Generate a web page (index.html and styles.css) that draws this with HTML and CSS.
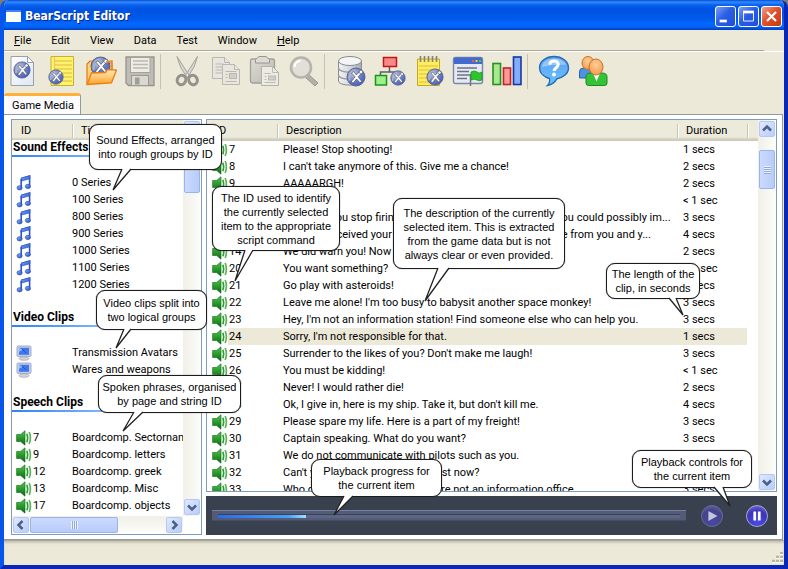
FILE: index.html
```html
<!DOCTYPE html>
<html lang="en">
<head>
<meta charset="utf-8">
<title>BearScript Editor</title>
<link rel="stylesheet" href="styles.css">
</head>
<body>
<svg class="defs" aria-hidden="true">
  <defs>
    <linearGradient id="gNote" x1="0" y1="0" x2="1" y2="1"><stop offset="0" stop-color="#8fc4ff"/><stop offset="1" stop-color="#1c3fb8"/></linearGradient>
    <linearGradient id="gGreen" x1="0" y1="0" x2="0" y2="1"><stop offset="0" stop-color="#4cc94a"/><stop offset="1" stop-color="#0b6a12"/></linearGradient>
    <radialGradient id="gBall" cx=".35" cy=".3" r=".8"><stop offset="0" stop-color="#b9c6e6"/><stop offset=".6" stop-color="#6479c4"/><stop offset="1" stop-color="#3c58c8"/></radialGradient>
    <linearGradient id="gPage" x1="0" y1="0" x2="1" y2="1"><stop offset="0" stop-color="#ffffff"/><stop offset="1" stop-color="#dfe5f4"/></linearGradient>
    <linearGradient id="gGray" x1="0" y1="0" x2="1" y2="1"><stop offset="0" stop-color="#dedcd4"/><stop offset="1" stop-color="#b9b7b0"/></linearGradient>
    <linearGradient id="gFolder" x1="0" y1="0" x2="0" y2="1"><stop offset="0" stop-color="#fff0c0"/><stop offset="1" stop-color="#ffa126"/></linearGradient>
    <linearGradient id="gDb" x1="0" y1="0" x2="1" y2="0"><stop offset="0" stop-color="#f2f2f2"/><stop offset=".5" stop-color="#d6d8dc"/><stop offset="1" stop-color="#a9acb4"/></linearGradient>
    <linearGradient id="gHelp" x1="0" y1="0" x2="0" y2="1"><stop offset="0" stop-color="#5a9cf0"/><stop offset="1" stop-color="#6cc6ff"/></linearGradient>
    <radialGradient id="gHead" cx=".5" cy=".35" r=".6"><stop offset="0" stop-color="#ffcf9a"/><stop offset="1" stop-color="#f79f52"/></radialGradient>
    <symbol id="note" viewBox="0 0 16 16"><path d="M5.2 3.500 13.600 1v9.400" fill="none" stroke="#2c55cc" stroke-width="1.600"/><path d="M5 3.200 14 .8v3L5 6.200z" fill="url(#gNote)" stroke="#2c55cc" stroke-width=".6"/><path d="M5.200 4v8.600" stroke="#2c55cc" stroke-width="1.600"/><ellipse cx="3.600" cy="12.800" rx="2.600" ry="2.100" fill="url(#gNote)" stroke="#2446b4" stroke-width=".7"/><ellipse cx="11.900" cy="11.400" rx="2.600" ry="2.100" fill="url(#gNote)" stroke="#2446b4" stroke-width=".7"/></symbol>
    <symbol id="monitor" viewBox="0 0 16 16"><rect x="1" y="1" width="14" height="10.600" rx="1.200" fill="#c3cbe2" stroke="#a4aeca"/><rect x="3" y="2.800" width="10" height="7" fill="#3f78ee"/><path d="m3 2.800 4 2-4 2z" fill="#8db8ff"/><path d="m6 4 4 4" stroke="#2350c4"/><ellipse cx="8" cy="13.600" rx="5" ry="1.700" fill="#d4d4dc" stroke="#a4a4b0" stroke-width=".8"/></symbol>
    <symbol id="speaker" viewBox="0 0 16 16"><path d="M.6 4.500h4L9 .8v14.400l-4.400-3.700H.6z" fill="url(#gGreen)" stroke="#0d6616" stroke-width=".6"/><path d="M10.900 3.800q1.600 4.200 0 8.400" fill="none" stroke="#2d9c33" stroke-width="1.700"/><path d="M13.200 2q2.400 6 0 12" fill="none" stroke="#56b65a" stroke-width="1.700"/></symbol>
    <symbol id="ball" viewBox="0 0 20 20"><circle cx="10" cy="10" r="9" fill="url(#gBall)" stroke="#5a6488" stroke-width="1"/><path d="M3.500 13.500q-1-7 5-10" fill="none" stroke="#aab4c8" stroke-width="2"/><path d="m5.500 6 3.600 3.800L5 15l2.300 1 3.300-4 3.300 3.600 2-1-3.800-4.800 3.500-3.600-2-1.700-3.200 3.500L7.600 4.500z" fill="#fff" stroke="#4b4d58" stroke-width=".7"/><circle cx="15" cy="5" r="1.800" fill="#fff" stroke="#555" stroke-width=".6"/></symbol>
    <symbol id="new" viewBox="0 0 32 32"><path d="M4 1.500h16.500l6 6V30.500H4z" fill="url(#gPage)" stroke="#98a0ac"/><path d="M20.500 1.500v6h6z" fill="#fff" stroke="#98a0ac"/><use href="#ball" x="6" y="6" width="18" height="18"/></symbol>
    <symbol id="yellow" viewBox="0 0 32 32"><path d="M5 1.500h22.500v29H5z" fill="#fff36e" stroke="#c4b32c"/><path d="M9 6h17M9 10h17M9 14h17M9 18h17M9 22h17M9 26h17" stroke="#e0b73c"/><path d="M8.500 2v28" stroke="#f0a06a" stroke-width=".7"/><use href="#ball" x="2" y="14" width="16" height="16"/></symbol>
    <symbol id="open" viewBox="0 0 32 32"><path d="M2 29V9l3-3h7l2 2h13v8" fill="#ffd36f" stroke="#e0771c" stroke-width="1.200"/><use href="#ball" x="5" y="1" width="21" height="21"/><path d="M21 7l6-1v9" fill="none" stroke="#f08a2a" stroke-width="1.500"/><path d="m2 29.500 4.500-11.500 14-.5 2-3 9 .5-5 13z" fill="url(#gFolder)" stroke="#ee7a12" stroke-width="1.300"/></symbol>
    <symbol id="save" viewBox="0 0 32 32"><path d="M2 2h28v28.500H4.500L2 28z" fill="#bebcb5" stroke="#96948e" stroke-width="1.300"/><rect x="6.500" y="2.500" width="19.500" height="15" fill="#eeece6" stroke="#a5a39c"/><path d="M9 6h15M9 9.500h15M9 13h15" stroke="#bab8b1" stroke-width="1.400"/><rect x="7.500" y="20.500" width="17" height="10" fill="#dad8d1" stroke="#9b9992"/><rect x="11" y="22.500" width="4.500" height="7" fill="#9f9d96"/></symbol>
    <symbol id="cut" viewBox="0 0 32 32"><path d="M6 1.500 18.500 21l-2.500 1.500Q8 12 6 1.500zM26.500 1.500 14 21l2.500 1.500Q24.500 12 26.500 1.500z" fill="#dad8d2" stroke="#a4a29b"/><ellipse cx="10.500" cy="25" rx="4.200" ry="4.800" transform="rotate(25 10.500 25)" fill="none" stroke="#94928b" stroke-width="3"/><ellipse cx="22" cy="25" rx="4.200" ry="4.800" transform="rotate(-25 22 25)" fill="none" stroke="#94928b" stroke-width="3"/></symbol>
    <symbol id="copy" viewBox="0 0 32 32"><g fill="#e8e6df" stroke="#b9b7af"><path d="M2.500 2.500h12l5 5v16h-17z"/><path d="M14.500 2.500v5h5M5.500 9h8M5.500 12h11M5.500 15h11M5.500 18h11" /><path d="M12.500 9.500h12l5 5v15h-17z"/><path d="M24.500 9.500v5h5M15.500 16.500h11M15.500 26.500h11M15.500 19.500h2M15.500 22.500h2"/><rect x="19.500" y="18.500" width="7" height="5" fill="#d0cec6"/></g></symbol>
    <symbol id="paste" viewBox="0 0 32 32"><rect x="1.500" y="4" width="24" height="24" rx="2" fill="url(#gGray)" stroke="#a19f98" stroke-width="1.300"/><path d="M6.500 8V4.500L10 1.500h7l3.500 3V8z" fill="#dddbd4" stroke="#98968f"/><path d="M12.500 11.500h11l6 6v13h-17z" fill="#edebe5" stroke="#b3b1a9"/><path d="M23.500 11.500v6h6M15.500 18.500h6M15.500 27.500h11M15.500 21.500h2M15.500 24.500h2" fill="none" stroke="#bcbab2"/><rect x="19.500" y="21" width="7" height="4" fill="#d0cec6" stroke="#bcbab2"/></symbol>
    <symbol id="search" viewBox="0 0 32 32"><path d="m20 19 10 9-3 3-10-9z" fill="#b3b1aa" stroke="#98968f"/><circle cx="13" cy="12.500" r="10" fill="#e1dfd8" stroke="#b6b4ad" stroke-width="2.600"/><path d="M6.500 12q.5-5.500 6-6.500" fill="none" stroke="#fff" stroke-width="2"/></symbol>
    <symbol id="database" viewBox="0 0 32 32"><path d="M3.500 6v20c0 5.500 23 5.500 23 0V6" fill="url(#gDb)" stroke="#868a92"/><ellipse cx="15" cy="6" rx="11.500" ry="4.500" fill="#f5f5f5" stroke="#868a92"/><path d="M3.500 13c0 5.500 23 5.500 23 0M3.500 20c0 5.500 23 5.500 23 0" fill="none" stroke="#999da6" stroke-width="1.300"/><use href="#ball" x="11" y="12" width="20" height="20"/></symbol>
    <symbol id="tree" viewBox="0 0 32 32"><path d="M15.500 11v6M6.500 22v-5h18v3" fill="none" stroke="#5e5e66" stroke-width="1.500"/><rect x="9.500" y="2.500" width="13" height="9" fill="#fb8888" stroke="#c21616" stroke-width="1.500"/><rect x="1.500" y="20.500" width="11" height="9.500" fill="#9df08c" stroke="#18961a" stroke-width="1.500"/><use href="#ball" x="16" y="15" width="16" height="16"/></symbol>
    <symbol id="notepad" viewBox="0 0 32 32"><path d="M4.500 4h22v26.500h-22z" fill="#ffed61" stroke="#c4aa24"/><path d="M6 11h19M6 15h19M6 19h19M6 23h19M6 27h19" stroke="#e2bb3d"/><path d="M7.500 1v6M11.500 1v6M15.500 1v6M19.500 1v6M23.500 1v6" stroke="#85817a" stroke-width="1.600"/><use href="#ball" x="13" y="13" width="18" height="18"/></symbol>
    <symbol id="window" viewBox="0 0 32 32"><rect x="1.500" y="2.500" width="29" height="26" rx="2" fill="#e6e9f2" stroke="#7b86a8" stroke-width="1.400"/><path d="M2 9V4q0-1.500 1.500-1.500h25q1.500 0 1.500 1.500v5z" fill="#4269d0"/><path d="M20 6h2" stroke="#f05a4a" stroke-width="2"/><path d="M23.500 6h2" stroke="#f6c93c" stroke-width="2"/><path d="M27 6h2" stroke="#50c84c" stroke-width="2"/><path d="M5 13h20M5 16.500h12M5 20h15M5 23.500h10" stroke="#6b7388" stroke-width="1.600"/><path d="M18.500 19v12" stroke="#70757c" stroke-width="1.500"/><path d="M19 17q4-2 6 0t5 0v8q-3 1.500-5 0t-6 0z" fill="#2cc52b" stroke="#1c981f" stroke-width=".8"/></symbol>
    <symbol id="chart" viewBox="0 0 32 32"><rect x="2" y="8.500" width="7.500" height="21" fill="#a7e98f" stroke="#2d8d24" stroke-width="1.600"/><rect x="12.500" y="13" width="7" height="16.500" fill="#ff9a96" stroke="#c02525" stroke-width="1.600"/><rect x="22.500" y="2" width="7.500" height="27.500" fill="#84aefc" stroke="#1737a6" stroke-width="1.600"/></symbol>
    <symbol id="help" viewBox="0 0 32 32"><path d="M16 1.500c8 0 14.500 5 14.500 11.200 0 6-5.500 10-11.500 11-2 3.500-5 6-9.500 6.800 2-2 2.500-4.500 2-7C6 22 1.500 18 1.500 12.700 1.500 6.500 8 1.500 16 1.500z" fill="url(#gHelp)" stroke="#236bb4" stroke-width="1.400"/><path d="M4 12C4 7 9 3.500 16 3.500S28 7 28 10q-12-1-24 2z" fill="#b9dcff" opacity=".6"/><path d="M11.800 9.700Q12 6 16 6t4.200 3.500c0 3-4 3-4 6.500" fill="none" stroke="#fff" stroke-width="3"/><circle cx="16" cy="19.500" r="1.900" fill="#fff"/></symbol>
    <symbol id="users" viewBox="0 0 32 32"><path d="M2.500 23v-6q0-4 4-4h8v10z" fill="#4c92e8" stroke="#2c61a8"/><ellipse cx="11" cy="8" rx="6" ry="6.500" fill="url(#gHead)" stroke="#c6722e"/><path d="M9 28v-6q0-4 5-4h11q5 0 5 4v6q0 2.500-2.500 2.500h-16Q9 30.500 9 28z" fill="#34c236" stroke="#1b8a22"/><path d="m16 18 3.500 8.500L23 18z" fill="#fff"/><ellipse cx="19" cy="12" rx="7" ry="8" fill="url(#gHead)" stroke="#c6722e"/></symbol>
    <symbol id="chev" viewBox="0 0 10 10"><path d="m1 6.500 4-4 4 4" fill="none" stroke="#4d6185" stroke-width="2.500"/></symbol>
  </defs>
</svg>

<div class="window">
  <header class="titlebar">
    <span class="app-icon"></span>
    <h1>BearScript Editor</h1>
    <button class="cap" aria-label="Minimize"><svg viewBox="0 0 21 21"><path d="M4 15.500h8" stroke="#fff" stroke-width="3"/></svg></button>
    <button class="cap" aria-label="Maximize"><svg viewBox="0 0 21 21"><path d="M5 6h11v9.500H5z" fill="none" stroke="#fff"/><path d="M4.500 5.500h12" stroke="#fff" stroke-width="3"/></svg></button>
    <button class="cap close" aria-label="Close"><svg viewBox="0 0 21 21"><path d="m5.500 5.500 10 10m0-10-10 10" stroke="#fff" stroke-width="2.400"/></svg></button>
  </header>

  <nav class="menu">
    <button><u>F</u>ile</button><button>Edit</button><button>View</button><button>Data</button><button>Test</button><button>Window</button><button><u>H</u>elp</button>
  </nav>

  <div class="toolbar" role="toolbar">
    <button aria-label="New"><svg><use href="#new"/></svg></button>
    <button aria-label="New page"><svg><use href="#yellow"/></svg></button>
    <button aria-label="Open"><svg><use href="#open"/></svg></button>
    <button aria-label="Save"><svg><use href="#save"/></svg></button>
    <span class="sep"></span>
    <button aria-label="Cut"><svg><use href="#cut"/></svg></button>
    <button aria-label="Copy"><svg><use href="#copy"/></svg></button>
    <button aria-label="Paste"><svg><use href="#paste"/></svg></button>
    <button aria-label="Find"><svg><use href="#search"/></svg></button>
    <span class="sep"></span>
    <button aria-label="Database"><svg><use href="#database"/></svg></button>
    <button aria-label="Structure"><svg><use href="#tree"/></svg></button>
    <button aria-label="Notes"><svg><use href="#notepad"/></svg></button>
    <button aria-label="Script window"><svg><use href="#window"/></svg></button>
    <button aria-label="Statistics"><svg><use href="#chart"/></svg></button>
    <span class="sep"></span>
    <button aria-label="Help"><svg><use href="#help"/></svg></button>
    <button aria-label="Users"><svg><use href="#users"/></svg></button>
  </div>

  <div class="tabs"><button class="tab">Game Media</button></div>

  <main class="panel">
    <section class="list groups">
      <div class="list-body">
        <div class="clip">
          <table>
            <colgroup><col class="c-icon"><col class="c-gid"><col></colgroup>
            <thead><tr><th colspan="2">ID</th><th>Title</th></tr></thead>
            <tbody>
              <tr class="group"><th colspan="3">Sound Effects</th></tr>
              <tr><td colspan="3"></td></tr>
              <tr><td><svg><use href="#note"/></svg></td><td></td><td>0 Series</td></tr>
              <tr><td><svg><use href="#note"/></svg></td><td></td><td>100 Series</td></tr>
              <tr><td><svg><use href="#note"/></svg></td><td></td><td>800 Series</td></tr>
              <tr><td><svg><use href="#note"/></svg></td><td></td><td>900 Series</td></tr>
              <tr><td><svg><use href="#note"/></svg></td><td></td><td>1000 Series</td></tr>
              <tr><td><svg><use href="#note"/></svg></td><td></td><td>1100 Series</td></tr>
              <tr><td><svg><use href="#note"/></svg></td><td></td><td>1200 Series</td></tr>
              <tr><td colspan="3"></td></tr>
              <tr class="group"><th colspan="3">Video Clips</th></tr>
              <tr><td colspan="3"></td></tr>
              <tr><td><svg><use href="#monitor"/></svg></td><td></td><td>Transmission Avatars</td></tr>
              <tr><td><svg><use href="#monitor"/></svg></td><td></td><td>Wares and weapons</td></tr>
              <tr><td colspan="3"></td></tr>
              <tr class="group"><th colspan="3">Speech Clips</th></tr>
              <tr><td colspan="3"></td></tr>
              <tr><td><svg><use href="#speaker"/></svg></td><td>7</td><td>Boardcomp. Sectornam</td></tr>
              <tr><td><svg><use href="#speaker"/></svg></td><td>9</td><td>Boardcomp. letters</td></tr>
              <tr><td><svg><use href="#speaker"/></svg></td><td>12</td><td>Boardcomp. greek</td></tr>
              <tr><td><svg><use href="#speaker"/></svg></td><td>13</td><td>Boardcomp. Misc</td></tr>
              <tr><td><svg><use href="#speaker"/></svg></td><td>17</td><td>Boardcomp. objects</td></tr>
            </tbody>
          </table>
        </div>
        <div class="vscroll">
          <button aria-label="Scroll up"><svg><use href="#chev"/></svg></button>
          <span class="thumb long"></span>
          <button class="down" aria-label="Scroll down"><svg><use href="#chev"/></svg></button>
        </div>
      </div>
      <div class="hscroll">
        <button class="left" aria-label="Scroll left"><svg><use href="#chev"/></svg></button>
        <span class="thumb"></span>
        <button class="right" aria-label="Scroll right"><svg><use href="#chev"/></svg></button>
      </div>
    </section>

    <div class="detail">
      <section class="list clips">
        <div class="list-body">
          <div class="clip">
            <table>
              <colgroup><col class="c-icon"><col class="c-id"><col><col class="c-dur"><col class="c-end"></colgroup>
              <thead><tr><th colspan="2">ID</th><th>Description</th><th>Duration</th><th></th></tr></thead>
              <tbody>
                <tr><td><svg><use href="#speaker"/></svg></td><td>7</td><td>Please! Stop shooting!</td><td>1 secs</td></tr>
                <tr><td><svg><use href="#speaker"/></svg></td><td>8</td><td>I can't take anymore of this. Give me a chance!</td><td>2 secs</td></tr>
                <tr><td><svg><use href="#speaker"/></svg></td><td>9</td><td>AAAAARGH!</td><td>2 secs</td></tr>
                <tr><td><svg><use href="#speaker"/></svg></td><td>10</td><td>No!</td><td>&lt; 1 sec</td></tr>
                <tr><td><svg><use href="#speaker"/></svg></td><td>12</td><td>I suggest you stop firing on me before I do all the things you could possibly im...</td><td>3 secs</td></tr>
                <tr><td><svg><use href="#speaker"/></svg></td><td>13</td><td>We have received your message. Get as far off as possible from you and y...</td><td>4 secs</td></tr>
                <tr><td><svg><use href="#speaker"/></svg></td><td>14</td><td>We did warn you! Now die!</td><td>2 secs</td></tr>
                <tr><td><svg><use href="#speaker"/></svg></td><td>20</td><td>You want something?</td><td>&lt; 1 sec</td></tr>
                <tr><td><svg><use href="#speaker"/></svg></td><td>21</td><td>Go play with asteroids!</td><td>2 secs</td></tr>
                <tr><td><svg><use href="#speaker"/></svg></td><td>22</td><td>Leave me alone! I'm too busy to babysit another space monkey!</td><td>3 secs</td></tr>
                <tr><td><svg><use href="#speaker"/></svg></td><td>23</td><td>Hey, I'm not an information station! Find someone else who can help you.</td><td>3 secs</td></tr>
                <tr class="selected"><td><svg><use href="#speaker"/></svg></td><td>24</td><td>Sorry, I'm not responsible for that.</td><td>1 secs</td></tr>
                <tr><td><svg><use href="#speaker"/></svg></td><td>25</td><td>Surrender to the likes of you? Don't make me laugh!</td><td>3 secs</td></tr>
                <tr><td><svg><use href="#speaker"/></svg></td><td>26</td><td>You must be kidding!</td><td>&lt; 1 sec</td></tr>
                <tr><td><svg><use href="#speaker"/></svg></td><td>27</td><td>Never! I would rather die!</td><td>2 secs</td></tr>
                <tr><td><svg><use href="#speaker"/></svg></td><td>28</td><td>Ok, I give in, here is my ship. Take it, but don't kill me.</td><td>4 secs</td></tr>
                <tr><td><svg><use href="#speaker"/></svg></td><td>29</td><td>Please spare my life. Here is a part of my freight!</td><td>3 secs</td></tr>
                <tr><td><svg><use href="#speaker"/></svg></td><td>30</td><td>Captain speaking. What do you want?</td><td>3 secs</td></tr>
                <tr><td><svg><use href="#speaker"/></svg></td><td>31</td><td>We do not communicate with pilots such as you.</td><td>3 secs</td></tr>
                <tr><td><svg><use href="#speaker"/></svg></td><td>32</td><td>Can't you see that we are busy just now?</td><td>2 secs</td></tr>
                <tr><td><svg><use href="#speaker"/></svg></td><td>33</td><td>Who do you think I am? No, we are not an information office.</td><td>3 secs</td></tr>
              </tbody>
            </table>
          </div>
          <div class="vscroll">
            <button aria-label="Scroll up"><svg><use href="#chev"/></svg></button>
            <span class="thumb grip"></span>
            <button class="down" aria-label="Scroll down"><svg><use href="#chev"/></svg></button>
          </div>
        </div>
      </section>
      <section class="player">
        <div class="track"><progress value="19" max="100" aria-label="Playback progress"></progress></div>
        <button class="play" aria-label="Play"><svg viewBox="0 0 22 22"><path d="m7 5.500 10 5.500-10 5.500z" fill="#c4c4dc"/></svg></button>
        <button class="pause" aria-label="Pause"><svg viewBox="0 0 22 22"><path d="M8.500 6v10M13.500 6v10" stroke="#fff" stroke-width="3"/></svg></button>
      </section>
    </div>
  </main>

  <footer class="status"><svg viewBox="0 0 12 12"><path d="M9 1h3M9 5h3M5 5h3M9 9h3M5 9h3M1 9h3" stroke="#b8b4a2" stroke-width="2.500"/><path d="M9 2.500h3M9 6.500h3M5 6.500h3M9 10.500h3M5 10.500h3M1 10.500h3" stroke="#fff"/></svg></footer>

  <aside class="callout k1"><p>Sound Effects, arranged<br>into rough groups by ID</p><svg width="22" height="24"><path d="M10 0 1 21 19 0"/></svg></aside>
  <aside class="callout k2"><p>The ID used to identify<br>the currently selected<br>item to the appropriate<br>script command</p><svg width="20" height="33"><path d="M11 0 1 31 19 0"/></svg></aside>
  <aside class="callout k3"><p>The description of the currently<br>selected item. This is extracted<br>from the game data but is not<br>always clear or even provided.</p><svg width="28" height="35"><path d="M14 0 1 33 25 0"/></svg></aside>
  <aside class="callout k4"><p>The length of the<br>clip, in seconds</p><svg width="18" height="19"><path d="M1 0 15 17 8 0"/></svg></aside>
  <aside class="callout k5"><p>Video clips split into<br>two logical groups</p><svg width="20" height="21"><path d="M9 0 1 19 16 0"/></svg></aside>
  <aside class="callout k6"><p>Spoken phrases, organised<br>by page and string ID</p><svg width="24" height="21"><path d="M12 0 1 19 21 0"/></svg></aside>
  <aside class="callout k7"><p>Playback progress for<br>the current item</p><svg width="24" height="21"><path d="M11 0 1 19 20 0"/></svg></aside>
  <aside class="callout k8"><p>Playback controls for<br>the current item</p><svg width="20" height="21"><path d="M1 0 17 19 10 0"/></svg></aside>
</div>
</body>
</html>
```

FILE: styles.css
```css
* { box-sizing: border-box; }
body { margin: 0; background: #7d7d74; }
body, button { font: 11px/17px Roboto, Tahoma, sans-serif; color: #000; }
button { border: 0; padding: 0; background: none; display: block; }
svg { display: block; }
.defs { position: absolute; width: 0; height: 0; }

.window {
  position: relative;
  display: flex;
  flex-direction: column;
  height: 100vh;
  border: solid #0a3fdc;
  border-width: 0 4px 4px;
  border-color: #0831d9 #0a28b8 #0a28b8 #0855ea;
  border-radius: 8px 8px 0 0;
  background: #ece9d8;
  overflow: hidden;
}

.titlebar {
  display: flex;
  align-items: center;
  gap: 2px;
  flex: none;
  height: 30px;
  margin: 0 -4px;
  padding: 2px 6px 0 6px;
  background: linear-gradient(#0a4ad0 0, #2f8bff 2px, #0a62ee 5px, #0053e1 9px, #0058ea 18px, #0268ff 24px, #0462f5 27px, #003dc0 30px);
}
.app-icon { width: 15px; height: 12px; margin-right: 2px; background: #fdfdf6; border-top: 2px solid #3a86f4; }
.titlebar h1 { flex: 1; margin: 0; font: bold 12px/20px "DejaVu Sans Condensed", sans-serif; color: #fff; text-shadow: 1px 1px 0 #0a2a80; }
.cap { width: 21px; height: 21px; border: 1px solid #fff; border-radius: 3px; background: linear-gradient(135deg, #7b9ff5, #2a5ee6 45%, #1f4fd8); }
.cap svg { width: 19px; height: 19px; }
.cap.close { background: linear-gradient(135deg, #f0a088, #e0512c 45%, #c8390f); }

.menu { display: flex; flex: none; gap: 20px; height: 21px; padding: 2px 10px; margin-right: 20px; border-bottom: 1px solid #aca899; }
.toolbar { display: flex; align-items: center; flex: none; height: 42px; padding-bottom: 3px; border-top: 1px solid #fff; }
.toolbar button { width: 39px; height: 32px; padding-left: 3px; }
.toolbar svg { width: 32px; height: 32px; }
.sep { width: 8px; height: 35px; border-left: 1px solid #c5c2b4; }

.tabs { display: flex; flex: none; height: 21px; }
.tab { height: 21px; padding: 0 6px 0 8px; line-height: 15px; background: #fcfcfe; border: 1px solid #919b9c; border-width: 3px 1px 0 0; border-top-color: #ffb13a; border-radius: 3px 3px 0 0; }

.panel { display: flex; gap: 4px; flex: 1; min-height: 0; margin-right: 1px; padding: 4px 5px 4px 7px; background: #fff; border: 1px solid #919b9c; border-left: 0; }
.list { display: flex; flex-direction: column; min-height: 0; border: 1px solid #7f9db9; background: #fff; }
.groups { width: 191px; flex: none; }
.list-body { display: flex; flex: 1; min-height: 0; }
.clip { flex: 1; min-width: 0; overflow: hidden; }
.detail { flex: 1; min-width: 0; display: flex; flex-direction: column; gap: 4px; }
.clips { flex: 1; }

table { width: 100%; table-layout: fixed; border-collapse: collapse; }
th, td { padding: 0; height: 17px; text-align: left; font-weight: normal; white-space: nowrap; overflow: hidden; }
thead th { position: relative; height: 21px; padding-left: 9px; background: linear-gradient(#ebeadb 0, #ebeadb 17px, #d6d2c2 19px, #cbc7b8 21px); }
.groups thead th { height: 20px; }
thead th + th::before { content: ""; position: absolute; left: 0; top: 4px; height: 14px; border-left: 1px solid #c7c5b2; border-right: 1px solid #fff; }
.c-icon { width: 21px; }
.c-gid { width: 39px; }
.c-id { width: 49px; }
.c-dur { width: 70px; }
.c-end { width: 11px; }
td svg { width: 16px; height: 16px; margin-left: 5px; }
.groups td svg { margin-left: 4px; }
.clips td:nth-child(3), .clips td:nth-child(4) { padding-left: 6px; }
.clips td:nth-child(2) { padding-left: 1px; }
.clips td:nth-child(3) { text-overflow: ellipsis; }
.selected td:nth-child(n+2) { background: #ece9d8; }
.group th { padding: 0 0 2px 1px; font-weight: bold; font-size: 12px; line-height: 15px; background: linear-gradient(90deg, #2f83f6, #8bbcf9 60%, #fff) bottom / 100% 2px no-repeat; }

.vscroll { display: flex; flex-direction: column; flex: none; width: 18px; padding: 1px; background: linear-gradient(90deg, #f0efe8, #fdfdfa); }
.vscroll button, .hscroll button { display: flex; align-items: center; justify-content: center; flex: none; width: 16px; height: 16px; border: 1px solid #b4c8f6; border-radius: 2px; background: linear-gradient(135deg, #dfe9ff, #b9cdfb); }
.vscroll svg, .hscroll svg { width: 10px; height: 10px; }
.vscroll .down { margin-top: auto; }
.down svg { rotate: 180deg; }
.left svg { rotate: -90deg; }
.right svg { rotate: 90deg; }
.thumb { display: flex; border: 1px solid #98b4ee; border-radius: 2px; background: #c3d3fd; }
.vscroll .thumb { width: 16px; height: 39px; background: linear-gradient(90deg, #cbdafe, #b9cbf9); }
.vscroll .long { height: 56px; }
.grip { margin-top: 13px; }
.thumb::after { content: ""; margin: auto; width: 7px; height: 8px; background: repeating-linear-gradient(#eef4ff 0 1px, #8fa9e4 1px 2px); }
.long::after { display: none; }
.hscroll { display: flex; flex: none; height: 18px; margin-right: 18px; padding: 1px; background: linear-gradient(#f0efe8, #fdfdfa); }
.hscroll .thumb { width: 88px; height: 16px; margin-left: 1px; background: linear-gradient(#cbdafe, #b9cbf9); }
.hscroll .thumb::after { background: repeating-linear-gradient(90deg, #eef4ff 0 1px, #8fa9e4 1px 2px); }
.hscroll .right { margin-left: auto; }

.player { display: flex; align-items: center; flex: none; height: 39px; padding: 0 9px 0 6px; background: #39404e; }
.track { flex: 1; height: 11px; padding: 3px 6px; margin-right: 15px; background: #525c78; border-top: 1px solid #75809f; border-bottom: 1px solid #444d66; }
progress { display: block; width: 100%; height: 4px; appearance: none; border: 0; }
progress::-webkit-progress-bar { background: #5d6784; border-top: 1px solid #3a4259; }
progress::-webkit-progress-value { background: linear-gradient(90deg, #2b6be8, #46a0f4 80%, #9fe2ff); }
.player button { width: 22px; height: 22px; border: 1px solid #a6a6d8; border-radius: 50%; background: radial-gradient(circle at 50% 85%, #4a4ae8, #3c35b8 60%, #7b7bd8); }
.player svg { width: 20px; height: 20px; }
.player .play { margin-right: 23px; border-color: #6c6c9c; background: radial-gradient(circle at 50% 80%, #4848a0, #44438a 60%, #6a6aa4); }

.status { flex: none; display: flex; align-items: flex-end; justify-content: flex-end; height: 25px; padding: 1px; border-top: 1px solid #aca899; box-shadow: inset 0 2px 2px #c9c6b6; }
.status svg { width: 12px; height: 12px; }

.callout { position: absolute; display: flex; justify-content: center; align-items: center; border: 1px solid #1c1c1c; border-radius: 9px; background: #fff; box-shadow: 0 0 1px #333; }
.callout p { margin: 0; font: 11px/14px "Liberation Sans", Arial, sans-serif; text-align: center; white-space: nowrap; }
.callout svg { position: absolute; top: 100%; fill: #fff; stroke: #222; stroke-width: 1.3; overflow: visible; }
.k1 { left: 85px; top: 124px; width: 133px; height: 46px; }
.k1 svg { left: 22px; }
.k2 { left: 208px; top: 186px; width: 128px; height: 65px; }
.k2 svg { left: 21px; }
.k3 { left: 389px; top: 198px; width: 172px; height: 71px; }
.k3 svg { left: 30px; }
.k4 { left: 602px; top: 263px; width: 94px; height: 36px; }
.k4 svg { left: 61px; }
.k5 { left: 92px; top: 290px; width: 111px; height: 40px; }
.k5 svg { left: 18px; }
.k6 { left: 94px; top: 375px; width: 143px; height: 38px; }
.k6 svg { left: 23px; }
.k7 { left: 307px; top: 459px; width: 131px; height: 38px; }
.k7 svg { left: 21px; }
.k8 { left: 628px; top: 450px; width: 120px; height: 38px; }
.k8 svg { left: 80px; }
```
